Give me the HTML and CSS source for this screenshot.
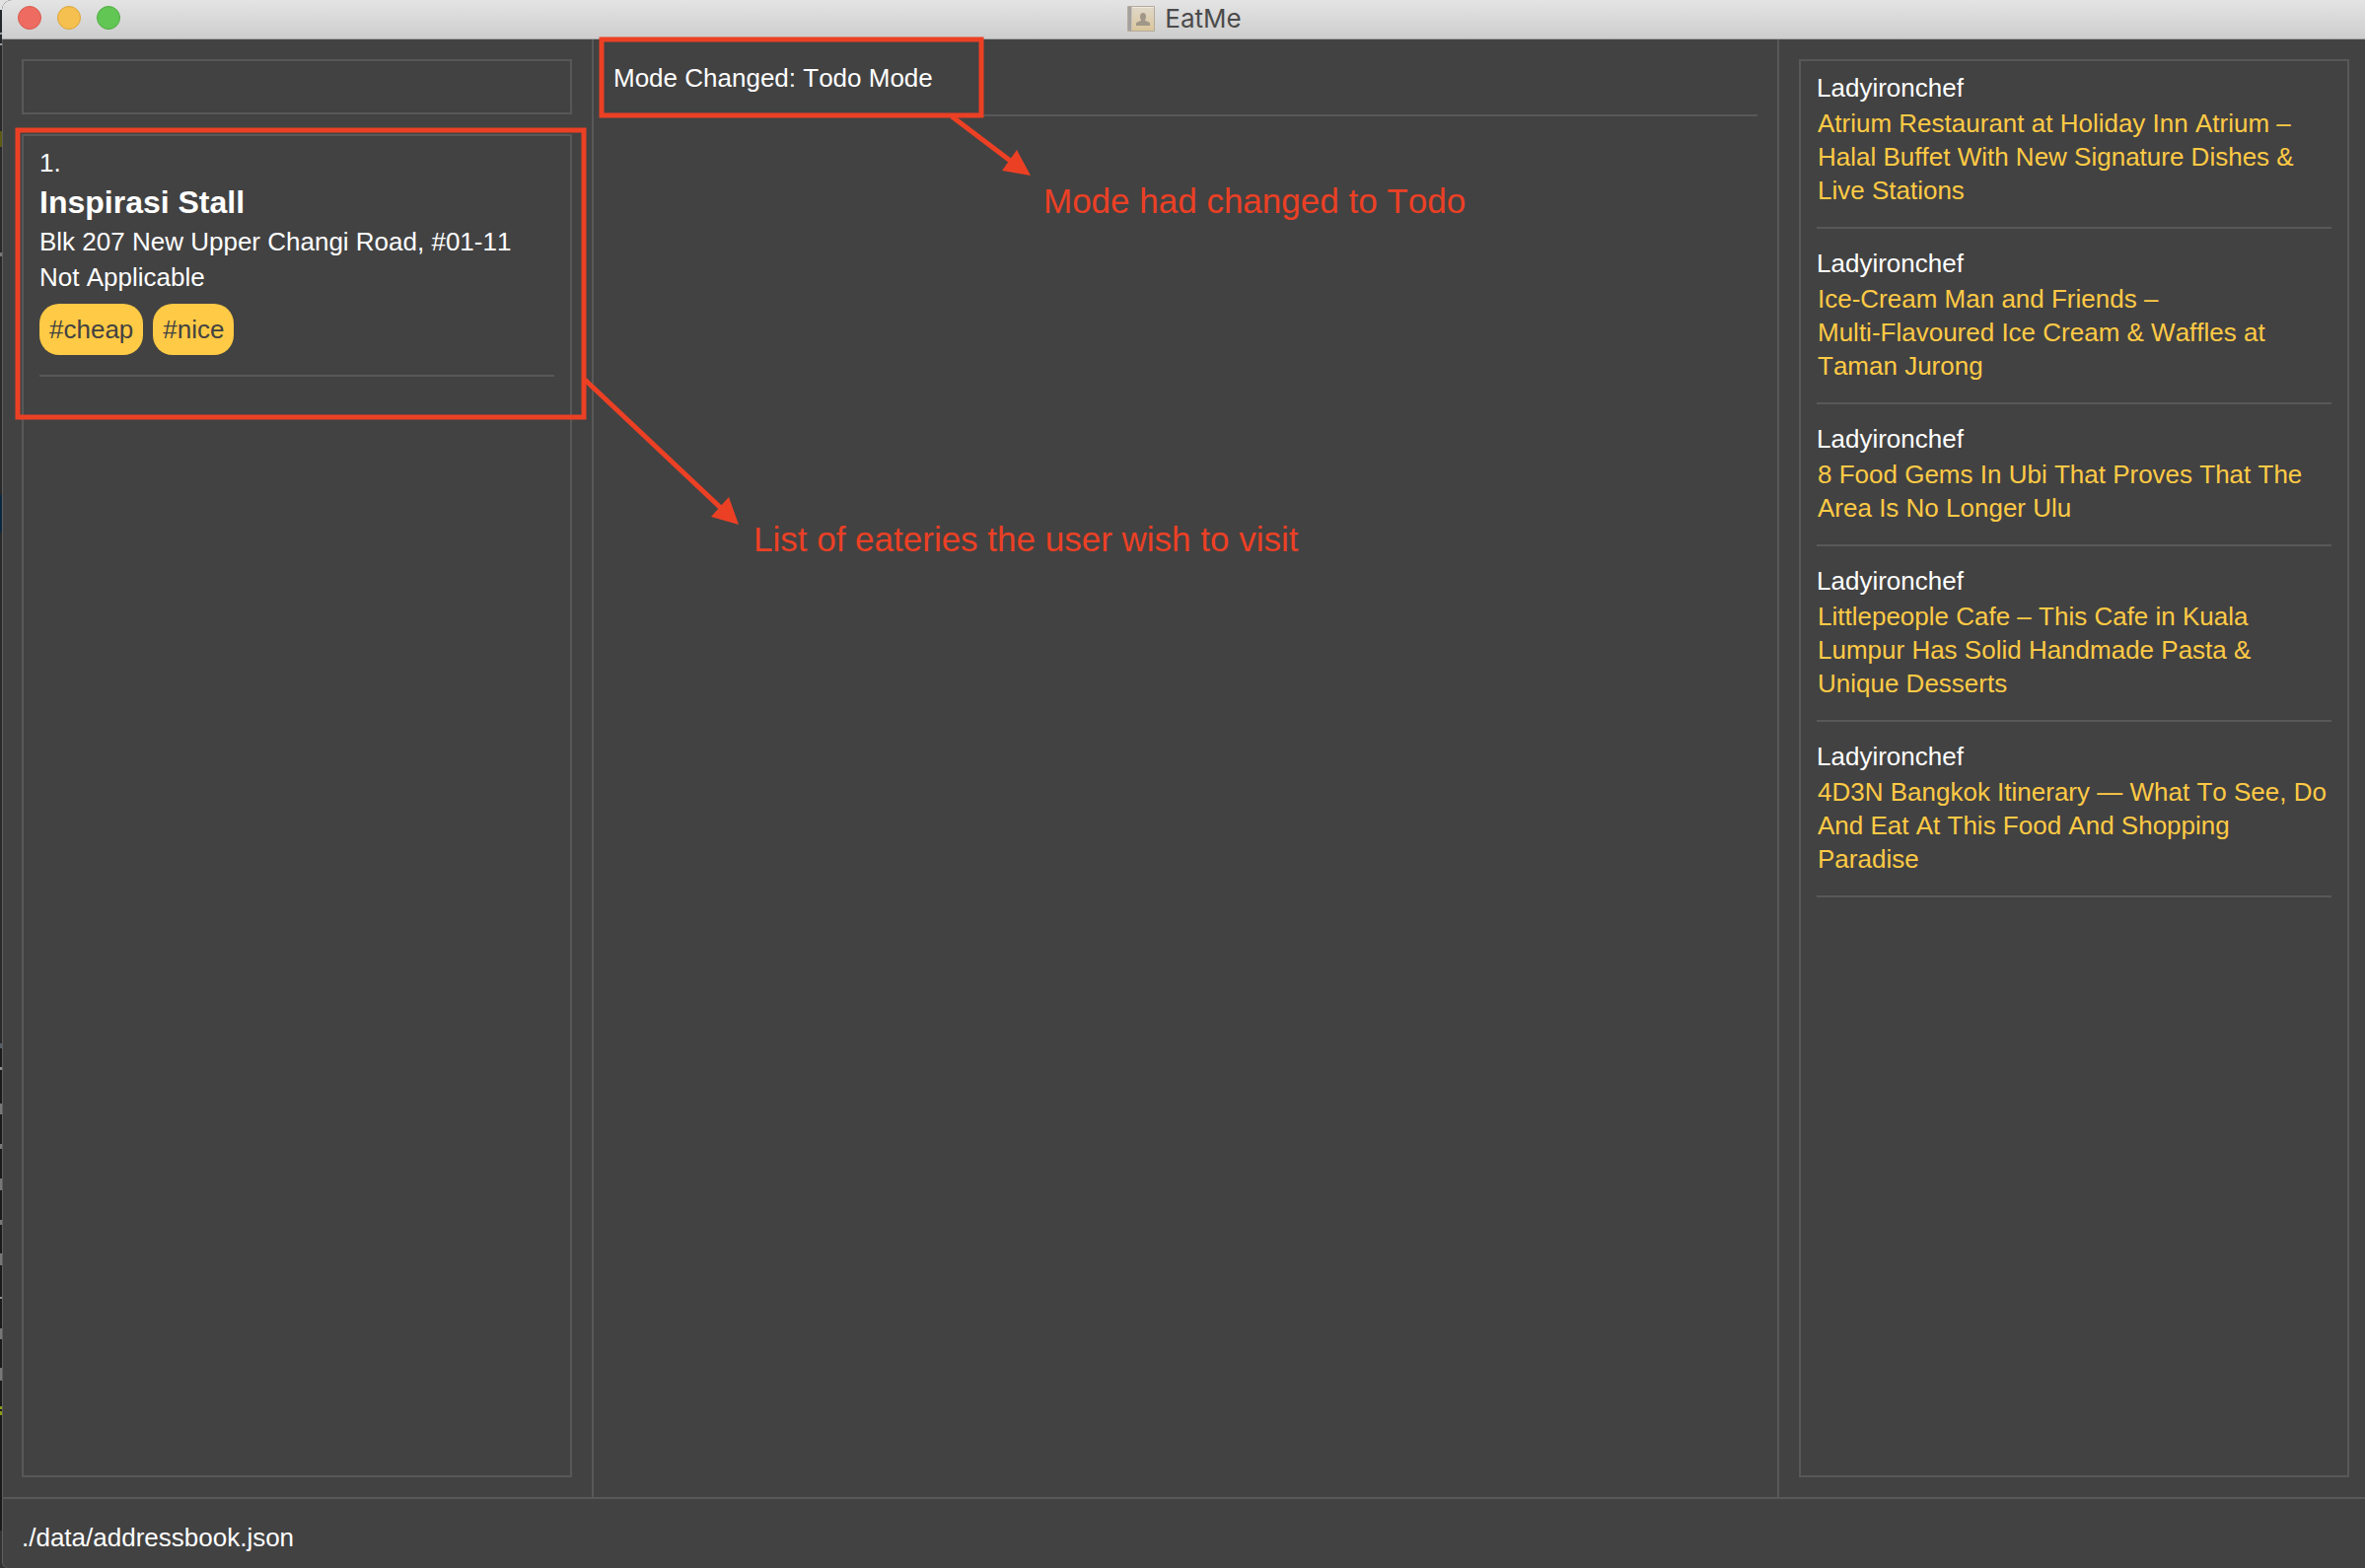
FILE: index.html
```html
<!DOCTYPE html>
<html lang="en">
<head>
<meta charset="utf-8">
<title>EatMe</title>
<link rel="stylesheet" href="styles.css">
</head>
<body>
<div class="window">
  <header class="titlebar">
    <div class="controls">
      <button class="light light-close" type="button" aria-label="Close"></button>
      <button class="light light-minimize" type="button" aria-label="Minimize"></button>
      <button class="light light-zoom" type="button" aria-label="Zoom"></button>
    </div>
    <h1 class="app-title">
      <svg class="app-icon" viewBox="0 0 28 26" aria-hidden="true">
        <defs>
          <linearGradient id="cover" x1="0" y1="0" x2="0" y2="1">
            <stop offset="0" stop-color="#e0d8c9"/>
            <stop offset="1" stop-color="#dac69c"/>
          </linearGradient>
        </defs>
        <rect x="0" y="0" width="28" height="26" rx="1" fill="#b5aa9b"/>
        <rect x="5" y="1" width="22" height="24" fill="url(#cover)"/>
        <rect x="5" y="1" width="22" height="1" fill="#eee9df"/>
        <rect x="1" y="1" width="3" height="24" fill="#a5a0a0"/>
        <rect x="4" y="1" width="1" height="24" fill="#c9c3ba"/>
        <path d="M9 20v-2c0-1 1-1.600 3-2.300 1.500-.500 2-1 2-1.700-.800-.800-1-1.800-1-3.200 0-2.300 1-3.800 3-3.800s3 1.500 3 3.800c0 1.400-.200 2.400-1 3.200 0 .700.500 1.200 2 1.700 2 .700 3 1.300 3 2.300v2z" fill="#a09788"/>
      </svg>
      EatMe
    </h1>
  </header>

  <main class="columns">
    <section class="panel panel-eateries">
      <input class="command" type="text" aria-label="Command">
      <ol class="list">
        <li class="eatery">
          <p class="line">1.</p>
          <h2 class="eatery-name">Inspirasi Stall</h2>
          <p class="line">Blk 207 New Upper Changi Road, #01-11</p>
          <p class="line">Not Applicable</p>
          <div class="tags"><span class="tag">#cheap</span><span class="tag">#nice</span></div>
        </li>
      </ol>
    </section>

    <section class="panel panel-result">
      <p class="line result">Mode Changed: Todo Mode</p>
    </section>

    <section class="panel panel-feed">
      <ul class="list">
        <li class="post">
          <p class="line">Ladyironchef</p>
          <a class="post-link" href="#">Atrium Restaurant at Holiday Inn Atrium – Halal Buffet With New Signature Dishes &amp; Live Stations</a>
        </li>
        <li class="post">
          <p class="line">Ladyironchef</p>
          <a class="post-link" href="#">Ice-Cream Man and Friends – <span class="keep">Multi-Flavoured</span> Ice Cream &amp; Waffles at Taman Jurong</a>
        </li>
        <li class="post">
          <p class="line">Ladyironchef</p>
          <a class="post-link" href="#">8 Food Gems In Ubi That Proves That The Area Is No Longer Ulu</a>
        </li>
        <li class="post">
          <p class="line">Ladyironchef</p>
          <a class="post-link" href="#">Littlepeople Cafe – This Cafe in Kuala Lumpur Has Solid Handmade Pasta &amp; Unique Desserts</a>
        </li>
        <li class="post">
          <p class="line">Ladyironchef</p>
          <a class="post-link" href="#">4D3N Bangkok Itinerary — What To See, Do And Eat At This Food And Shopping Paradise</a>
        </li>
      </ul>
    </section>
  </main>

  <footer class="status line">./data/addressbook.json</footer>
</div>

<svg class="note-shapes" width="1100" height="560" aria-hidden="true">
  <g fill="none" stroke="#ec4025" stroke-width="5">
    <rect x="610" y="40" width="385" height="77"/>
    <rect x="18" y="132" width="574" height="291"/>
    <path d="M965 118L1027 165M593 385L734 518"/>
  </g>
  <path d="M1045 178L1031 152L1016 173ZM749 532L739 504L721 524Z" fill="#ec4025"/>
</svg>
<p class="note note-mode">Mode had changed to Todo</p>
<p class="note note-list">List of eateries the user wish to visit</p>
</body>
</html>
```
FILE: styles.css
```css
:root {
  --surface: #424242;
  --line: #585858;
  --accent: #ffca45;
  --note: #ec4025;
}

* {
  box-sizing: border-box;
}

/* The desktop shows as a thin strip along the left of the window. */
body {
  margin: 0;
  padding-left: 2px;
  font-family: "Liberation Sans", Arial, sans-serif;
  font-size: 26px;
  font-kerning: none;
  color: #fff;
  background: linear-gradient(
    #e2e2e2 10px, #24282b 10px 33px, #a0a0a0 33px 35px, #24282b 35px 44px,
    #a0a0a0 44px 46px, #27292b 46px 133px, #5d5a14 133px 149px,
    #27292b 149px 256px, #777 256px 260px, #27292b 260px 502px,
    #0b2740 502px 540px, #27292b 540px 1058px, #555d65 1058px 1063px,
    #1b1b1b 1063px 1082px, #8f8f8f 1082px 1085px, #1b1b1b 1085px 1119px,
    #777 1119px 1130px, #1b1b1b 1130px 1160px, #777 1160px 1165px,
    #1b1b1b 1165px 1195px, #777 1195px 1207px, #1b1b1b 1207px 1237px,
    #777 1237px 1242px, #1b1b1b 1242px 1271px, #777 1271px 1283px,
    #1b1b1b 1283px 1315px, #8f8f8f 1315px 1317px, #1b1b1b 1317px 1347px,
    #777 1347px 1358px, #1b1b1b 1358px 1387px, #777 1387px 1400px,
    #1b1b1b 1400px 1426px, #8a9a14 1426px 1429px, #1b1b1b 1429px 1431px,
    #8a9a14 1431px 1435px, #1b1b1b 1435px 1552px, #333 1552px
  );
}

h1, h2, p, ol, ul {
  margin: 0;
  padding: 0;
}

ol, ul {
  list-style: none;
}

.window {
  display: flex;
  flex-direction: column;
  min-height: 100vh;
  background: var(--surface);
  border-radius: 10px 0 0 6px;
  box-shadow: inset 1px 0 #5e5e5e;
}

.titlebar {
  display: grid;
  grid-template-columns: 1fr auto 1fr;
  align-items: center;
  height: 40px;
  padding: 0 16px 4px;
  border-bottom: 1px solid #a5a5a5;
  border-radius: 10px 0 0 0;
  background: linear-gradient(#e4e4e4, #cdcdcd);
}

.controls {
  display: flex;
  gap: 16px;
}

.light {
  width: 24px;
  height: 24px;
  padding: 0;
  border: 1px solid;
  border-radius: 50%;
}

.light-close {
  background: #ed6b60;
  border-color: #d85a50;
}

.light-minimize {
  background: #f5c04f;
  border-color: #dca53c;
}

.light-zoom {
  background: #62c655;
  border-color: #4fad3f;
}

.app-title {
  display: flex;
  align-items: center;
  gap: 10px;
  padding: 2px 0 0 2px;
  font: 400 26px/32px Inter, sans-serif;
  color: #4b4b4b;
}

.app-icon {
  width: 28px;
  height: 26px;
}

.columns {
  flex: 1;
  display: grid;
  grid-template-columns: 600px 1fr 596px;
}

.panel {
  display: flex;
  flex-direction: column;
  gap: 20px;
  padding: 20px;
}

.panel-eateries {
  border-right: 2px solid var(--line);
}

.panel-feed {
  padding-right: 16px;
  border-left: 2px solid var(--line);
}

.command {
  width: 100%;
  height: 56px;
  padding: 0 16px;
  border: 2px solid var(--line);
  background: transparent;
  color: inherit;
  font: inherit;
}

.list {
  flex: 1;
  padding: 9px 16px;
  border: 2px solid var(--line);
}

.line {
  line-height: 36px;
}

.eatery {
  padding-bottom: 20px;
  border-bottom: 2px solid var(--line);
}

.eatery-name {
  font-size: 32px;
  line-height: 44px;
}

.tags {
  display: flex;
  gap: 10px;
  margin-top: 9px;
}

.tag {
  padding: 0 10px;
  border-radius: 20px;
  background: var(--accent);
  color: var(--surface);
  line-height: 52px;
}

.result {
  padding: 1px 0 19px;
  border-bottom: 2px solid var(--line);
}

.post {
  margin-bottom: 17px;
  padding-bottom: 20px;
  border-bottom: 2px solid var(--line);
}

.post-link {
  display: block;
  padding: 1px 0 0 1px;
  color: var(--accent);
  line-height: 34px;
  text-decoration: none;
}

.keep {
  white-space: nowrap;
}

.status {
  padding: 21px 20px 13px;
  border-top: 2px solid var(--line);
}

/* Callouts drawn over the window. */
.note-shapes {
  position: absolute;
  top: 0;
  left: 0;
  pointer-events: none;
}

.note {
  position: absolute;
  color: var(--note);
  font-size: 35px;
  line-height: 40px;
  white-space: nowrap;
}

.note-mode {
  top: 184px;
  left: 1058px;
}

.note-list {
  top: 527px;
  left: 764px;
}
```
